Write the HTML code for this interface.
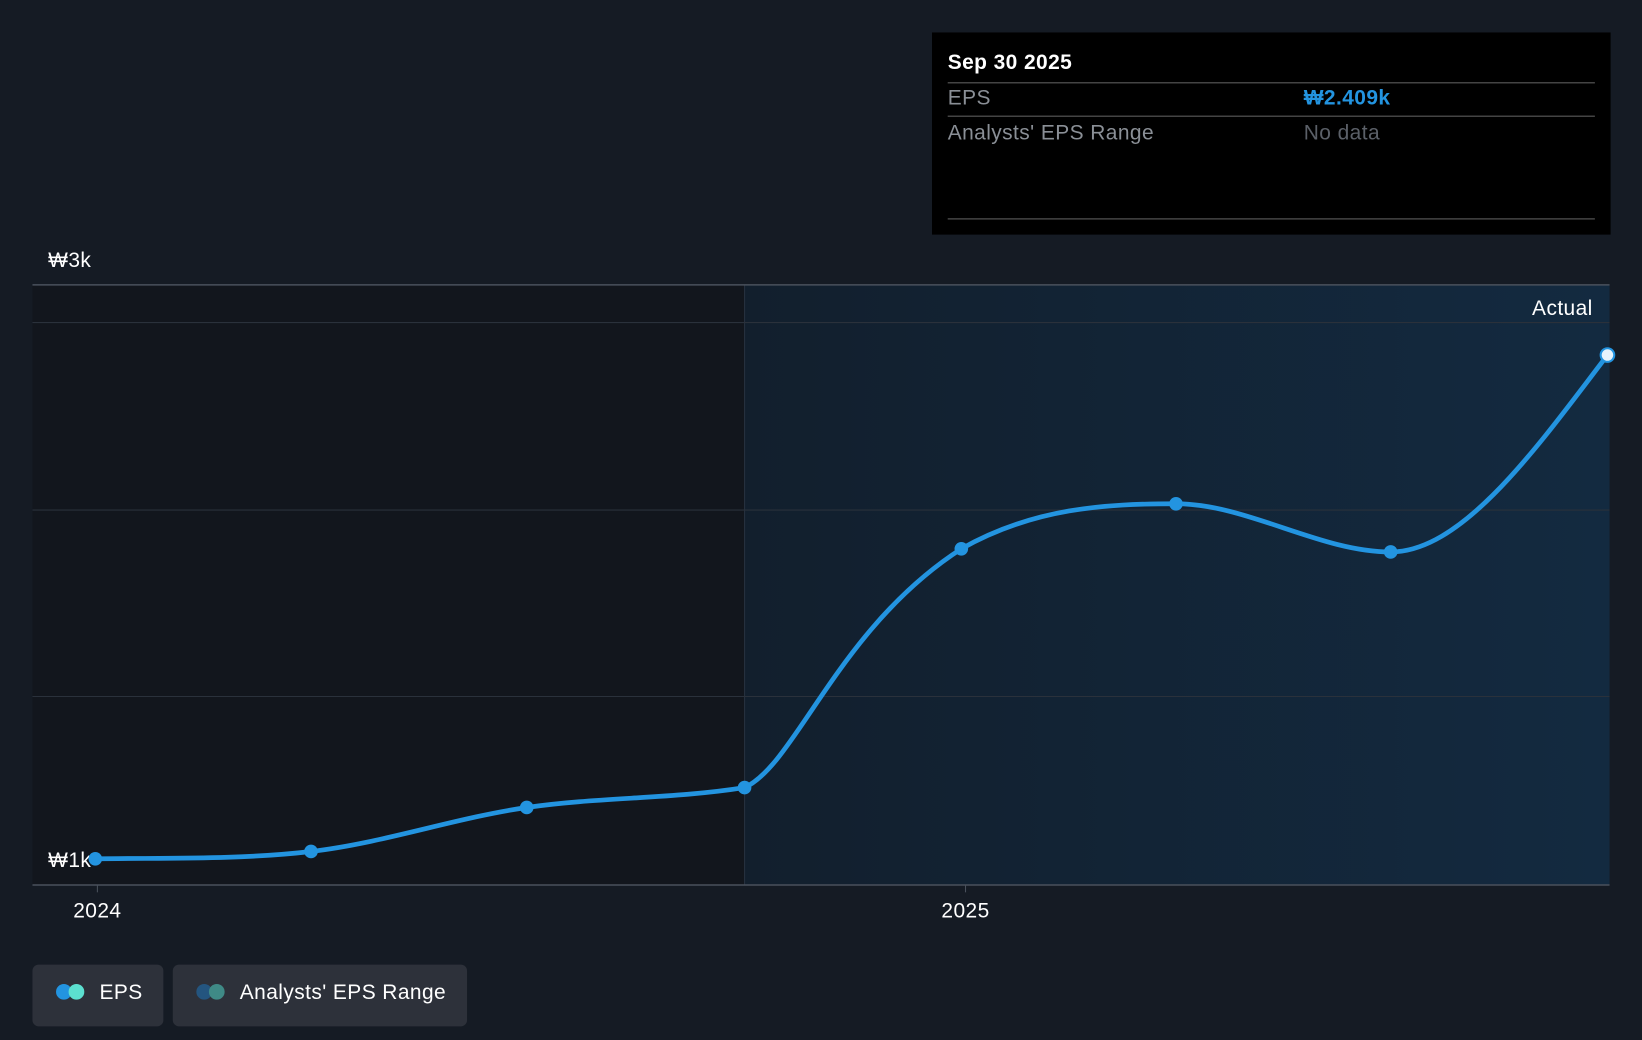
<!DOCTYPE html>
<html><head><meta charset="utf-8"><style>
html,body{margin:0;padding:0;background:#151b24;overflow:hidden}
svg{display:block}
text{font-family:"Liberation Sans",sans-serif;letter-spacing:0.4px}
</style></head><body>
<svg width="1642" height="1040" viewBox="0 0 1568 993" preserveAspectRatio="none">
<defs>
<linearGradient id="g" x1="0" x2="1" y1="0" y2="0">
<stop offset="0" stop-color="#121f2d"/><stop offset="1" stop-color="#132a40"/>
</linearGradient>
</defs>
<rect width="1568" height="993" fill="#151b24"/>
<rect x="31" y="272" width="680" height="573" fill="#12161d"/>
<rect x="711" y="272" width="826" height="573" fill="url(#g)"/>
<line x1="711" y1="272" x2="711" y2="845" stroke="#26323f" stroke-width="1"/>
<line x1="31" y1="272" x2="1537" y2="272" stroke="#4a515c" stroke-width="1.5"/>
<line x1="31" y1="308" x2="1537" y2="308" stroke="#2a313b" stroke-width="1"/>
<line x1="31" y1="487" x2="1537" y2="487" stroke="#2a313b" stroke-width="1"/>
<line x1="31" y1="665" x2="1537" y2="665" stroke="#2a313b" stroke-width="1"/>
<line x1="31" y1="845" x2="1537" y2="845" stroke="#4a515c" stroke-width="1.5"/>
<line x1="93" y1="845" x2="93" y2="852" stroke="#4a515c"/>
<line x1="922" y1="845" x2="922" y2="852" stroke="#4a515c"/>
<text x="46" y="255" fill="#fff" font-size="20">₩3k</text>
<text x="46" y="828" fill="#fff" font-size="20">₩1k</text>
<text x="1521" y="301" fill="#fff" font-size="20" text-anchor="end">Actual</text>
<text x="93" y="876" fill="#fff" font-size="20" text-anchor="middle">2024</text>
<text x="922" y="876" fill="#fff" font-size="20" text-anchor="middle">2025</text>
<path d="M91,820 C160,819 228,821 297,813 C366,805 434,781 503,771 C572,761 642,763 711,752 C760,730 800,600 918,524 C987,485 1055,481 1123,481 C1191,481 1260,527 1328,527 C1396,527 1466,430 1535,339" fill="none" stroke="#2394e0" stroke-width="4.5" stroke-linecap="round"/>
<g fill="#2394e0">
<circle cx="91" cy="820" r="6.5"/><circle cx="297" cy="813" r="6.5"/><circle cx="503" cy="771" r="6.5"/><circle cx="711" cy="752" r="6.5"/><circle cx="918" cy="524" r="6.5"/><circle cx="1123" cy="481" r="6.5"/><circle cx="1328" cy="527" r="6.5"/>
</g>
<circle cx="1535" cy="339" r="6.5" fill="#e8f4fc" stroke="#2394e0" stroke-width="2"/>
<rect x="890" y="31" width="648" height="193" fill="#000"/>
<text x="905" y="66" fill="#fff" font-size="20" font-weight="bold">Sep 30 2025</text>
<line x1="905" y1="79" x2="1523" y2="79" stroke="#444" stroke-width="1.5"/>
<text x="905" y="100" fill="#8a8f96" font-size="20">EPS</text>
<text x="1245" y="100" fill="#2394e0" font-size="20" font-weight="bold">₩2.409k</text>
<line x1="905" y1="111" x2="1523" y2="111" stroke="#444" stroke-width="1.5"/>
<text x="905" y="133" fill="#8a8f96" font-size="20">Analysts' EPS Range</text>
<text x="1245" y="133" fill="#5b6068" font-size="20">No data</text>
<line x1="905" y1="209" x2="1523" y2="209" stroke="#444" stroke-width="1.5"/>
<rect x="31" y="921" width="125" height="59" rx="6" fill="#2d313a"/>
<circle cx="61" cy="947" r="7.5" fill="#2394e0"/><circle cx="73" cy="947" r="7.5" fill="#5ce0d0"/>
<text x="95" y="954" fill="#fff" font-size="20">EPS</text>
<rect x="165" y="921" width="281" height="59" rx="6" fill="#2d313a"/>
<circle cx="195" cy="947" r="7.5" fill="#24557f"/><circle cx="207" cy="947" r="7.5" fill="#3f8a86"/>
<text x="229" y="954" fill="#fff" font-size="20">Analysts' EPS Range</text>
</svg>
</body></html>
